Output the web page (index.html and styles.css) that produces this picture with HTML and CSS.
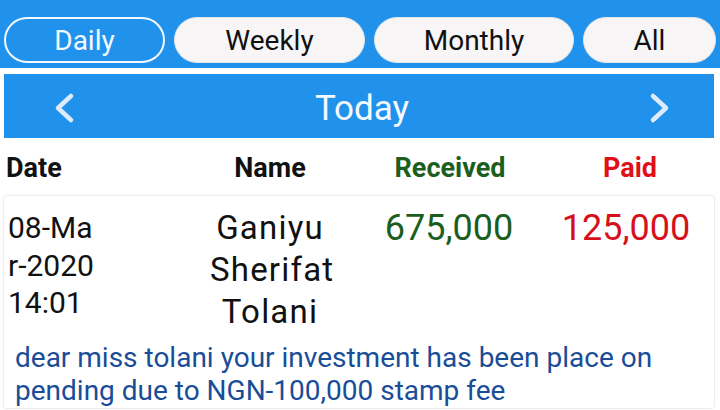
FILE: index.html
```html
<!DOCTYPE html>
<html>
<head>
<meta charset="utf-8">
<link rel="stylesheet" href="styles.css">
</head>
<body>
<div class="tabs">
  <div class="pill pill-active pill-daily">Daily</div>
  <div class="pill pill-weekly">Weekly</div>
  <div class="pill pill-monthly">Monthly</div>
  <div class="pill pill-all">All</div>
</div>
<div class="nav">
  <svg class="chev" width="24" height="32" viewBox="0 0 24 32"><path d="M18 4 L5 16 L18 28" fill="none" stroke="#dcecfb" stroke-width="4.5" stroke-linecap="round" stroke-linejoin="round"/></svg>
  <div class="nav-title">Today</div>
  <svg class="chev" width="24" height="32" viewBox="0 0 24 32"><path d="M6 4 L19 16 L6 28" fill="none" stroke="#dcecfb" stroke-width="4.5" stroke-linecap="round" stroke-linejoin="round"/></svg>
</div>
<div class="head">
  <div class="h-date">Date</div>
  <div class="h-name">Name</div>
  <div class="h-rec">Received</div>
  <div class="h-paid">Paid</div>
</div>
<div class="card">
  <div class="row">
    <div class="c-date"><span>08-Mar-2020 14:01</span></div>
    <div class="c-name">Ganiyu Sherifat Tolani</div>
    <div class="c-rec">675,000</div>
    <div class="c-paid">125,000</div>
  </div>
  <div class="note">dear miss tolani your investment has been place on pending due to NGN-100,000 stamp fee</div>
</div>
</body>
</html>
```
FILE: styles.css
```css
* { box-sizing: border-box; }
html, body { margin: 0; padding: 0; }
body {
  width: 720px;
  height: 410px;
  overflow: hidden;
  background: #ffffff;
  font-family: Roboto, "Noto Sans", sans-serif;
}
.tabs {
  background: #2192ec;
  height: 68px;
  padding: 17px 0 5px 4px;
  display: flex;
  gap: 9px;
}
.pill {
  height: 46px;
  border-radius: 23px;
  background: #f7f5f5;
  border: 1px solid #e6e6e6;
  color: #111;
  font-size: 28px;
  padding-top: 1px;
  display: flex;
  align-items: center;
  justify-content: center;
}
.pill-daily { width: 161px; }
.pill-weekly { width: 191px; }
.pill-monthly { width: 200px; }
.pill-all { width: 133px; }
.pill-active {
  background: transparent;
  border: 2px solid #f2f8ff;
  color: #f4f9ff;
}
.nav {
  margin: 6px 6px 0 4px;
  height: 64px;
  background: #2192ec;
  display: flex;
  align-items: center;
  justify-content: space-between;
  padding: 4px 43px 0 49px;
}
.nav-title {
  color: #f4f9ff;
  font-size: 35px;
}
.head {
  height: 58px;
  padding-top: 2px;
  display: grid;
  grid-template-columns: 180px 180px 180px 180px;
  align-items: center;
  font-weight: 700;
  font-size: 27px;
  color: #111;
}
.h-date { padding-left: 6px; }
.h-name { text-align: center; }
.h-rec { text-align: center; color: #1b5e20; }
.h-paid { text-align: center; color: #e0101a; }
.card {
  margin: 0 6px 0 4px;
  height: 212px;
  background: #fff;
  box-shadow: 0 0 2px rgba(0,0,0,0.25);
  border-radius: 2px;
  padding-top: 13px;
}
.row {
  display: grid;
  grid-template-columns: 176px 180px 178px 1fr;
  align-items: start;
}
.c-date {
  padding-left: 4px;
  font-size: 30px;
  line-height: 37.5px;
  color: #111;
}
.c-date span {
  display: block;
  width: 90px;
  word-break: break-all;
}
.c-name {
  text-align: center;
  font-size: 33px;
  line-height: 42px;
  letter-spacing: 1.2px;
  color: #111;
  margin-top: -2px;
  padding: 0 30px;
}
.c-rec {
  text-align: center;
  font-size: 36px;
  line-height: 40px;
  color: #1b5e20;
  margin-top: -1px;
}
.c-paid {
  text-align: center;
  font-size: 36px;
  line-height: 40px;
  color: #d5121c;
  margin-top: -1px;
}
.note {
  margin-top: 8px;
  padding-left: 11px;
  font-size: 28px;
  line-height: 33px;
  color: #1a4d98;
}
```
